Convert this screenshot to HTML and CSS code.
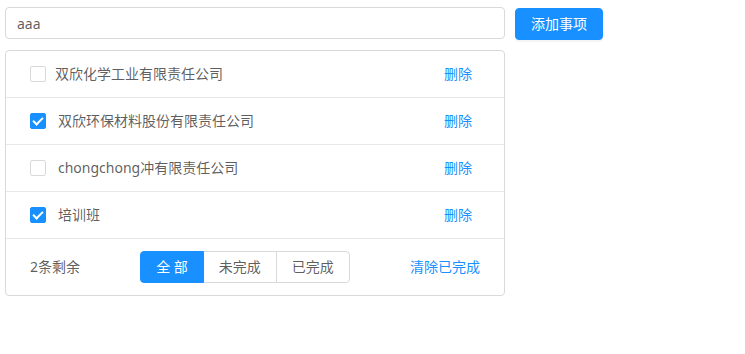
FILE: index.html
```html
<!doctype html>
<html lang="zh-CN">
    <head>
        <meta charset="UTF-8" />
        <meta name="viewport" content="width=device-width, initial-scale=1.0" />
        <title>Todo</title>
        <link rel="stylesheet" href="styles.css">
    </head>
    <body>
        <div class="app">
            <div class="add-bar">
                <input type="text" class="add-input" value="aaa" />
                <button class="btn btn-primary">添加事项</button>
            </div>
            <div class="todo-card">
                <ul class="todo-list">
                    <li class="todo-item">
                        <span class="check"></span>
                        <span class="todo-text first">双欣化学工业有限责任公司</span>
                        <a class="del">删除</a>
                    </li>
                    <li class="todo-item">
                        <span class="check checked"></span>
                        <span class="todo-text">双欣环保材料股份有限责任公司</span>
                        <a class="del">删除</a>
                    </li>
                    <li class="todo-item">
                        <span class="check"></span>
                        <span class="todo-text">chongchong冲有限责任公司</span>
                        <a class="del">删除</a>
                    </li>
                    <li class="todo-item">
                        <span class="check checked"></span>
                        <span class="todo-text">培训班</span>
                        <a class="del">删除</a>
                    </li>
                </ul>
                <div class="todo-footer">
                    <span>2条剩余</span>
                    <div class="seg">
                        <button class="seg-btn active">全 部</button>
                        <button class="seg-btn">未完成</button>
                        <button class="seg-btn">已完成</button>
                    </div>
                    <a class="clear">清除已完成</a>
                </div>
            </div>
        </div>
    </body>
</html>
```

FILE: styles.css
```css
:root {
    --primary: #1890ff;
    --text: rgba(0, 0, 0, 0.65);
    --border: #d9d9d9;
    --split: #e8e8e8;
}
body {
    margin: 0;
    font-family: "Noto Sans", "Noto Sans CJK SC", sans-serif;
    font-size: 14px;
    line-height: 22px;
    color: var(--text);
    background: #fff;
}
.app {
    padding: 7px 5px;
    width: 598px;
}
.add-bar {
    display: flex;
    align-items: flex-start;
    gap: 10px;
}
.add-input {
    box-sizing: border-box;
    width: 500px;
    height: 32px;
    padding: 4px 11px;
    border: 1px solid var(--border);
    border-radius: 4px;
    font: inherit;
    color: var(--text);
    outline: none;
}
.btn {
    box-sizing: border-box;
    height: 32px;
    padding: 0 15px;
    border: 1px solid var(--border);
    border-radius: 4px;
    font: inherit;
    cursor: pointer;
}
.btn-primary {
    margin-top: 1px;
    background: var(--primary);
    border-color: var(--primary);
    color: #fff;
    box-shadow: 0 2px 0 rgba(0, 0, 0, 0.045);
}
.todo-card {
    box-sizing: border-box;
    width: 500px;
    margin-top: 10px;
    border: 1px solid var(--border);
    border-radius: 4px;
}
.todo-list {
    list-style: none;
    margin: 0;
    padding: 0;
}
.todo-item {
    display: flex;
    align-items: center;
    padding: 12px 24px;
    border-bottom: 1px solid var(--split);
}
.check {
    box-sizing: border-box;
    width: 16px;
    height: 16px;
    border: 1px solid var(--border);
    border-radius: 2px;
    position: relative;
    flex: none;
}
.check.checked {
    background: var(--primary);
    border-color: var(--primary);
}
.check.checked::after {
    content: "";
    position: absolute;
    left: 4px;
    top: 1px;
    width: 4px;
    height: 8px;
    border: 2px solid #fff;
    border-top: 0;
    border-left: 0;
    transform: rotate(45deg);
}
.todo-text {
    flex: 1;
    padding-left: 12px;
}
.todo-text.first {
    padding-left: 9px;
}
.del {
    color: var(--primary);
    margin-right: 8px;
    cursor: pointer;
}
.todo-footer {
    display: flex;
    align-items: center;
    justify-content: space-between;
    padding: 12px 24px;
}
.seg {
    display: flex;
}
.seg-btn {
    box-sizing: border-box;
    height: 32px;
    padding: 0 15px;
    background: #fff;
    border: 1px solid var(--border);
    margin-left: -1px;
    font: inherit;
    color: var(--text);
}
.seg-btn:first-child {
    margin-left: 0;
    border-radius: 4px 0 0 4px;
}
.seg-btn:last-child {
    border-radius: 0 4px 4px 0;
}
.seg-btn.active {
    background: var(--primary);
    border-color: var(--primary);
    color: #fff;
    position: relative;
}
.clear {
    color: var(--primary);
    cursor: pointer;
}
```
